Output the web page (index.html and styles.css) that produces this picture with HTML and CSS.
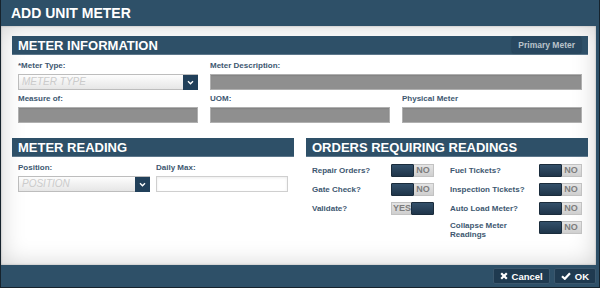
FILE: index.html
```html
<!DOCTYPE html>
<html>
<head>
    <meta charset="UTF-8">
    <title>Add Unit Meter</title>
    <link rel="stylesheet" href="styles.css">
</head>
<body>
    <div class="dialog">
        <div class="dialog-title">ADD UNIT METER</div>

        <div class="dialog-body">
            <div class="section">
                <div class="section-header">
                    <span>METER INFORMATION</span>
                    <button class="header-btn">Primary Meter</button>
                </div>
                <div class="fields three">
                    <div class="field">
                        <label>*Meter Type:</label>
                        <div class="select">
                            <span class="placeholder">METER TYPE</span>
                            <span class="select-btn">
                                <svg width="15" height="15" viewBox="0 0 15 15"><path d="M5 6.2 L7.5 8.7 L10 6.2" fill="none" stroke="#fff" stroke-width="1.4"/></svg>
                            </span>
                        </div>
                    </div>
                    <div class="field span2">
                        <label>Meter Description:</label>
                        <div class="input disabled"></div>
                    </div>
                    <div class="field">
                        <label>Measure of:</label>
                        <div class="input disabled"></div>
                    </div>
                    <div class="field">
                        <label>UOM:</label>
                        <div class="input disabled"></div>
                    </div>
                    <div class="field">
                        <label>Physical Meter</label>
                        <div class="input disabled"></div>
                    </div>
                </div>
            </div>

            <div class="halves">
                <div class="section">
                    <div class="section-header">
                        <span>METER READING</span>
                    </div>
                    <div class="fields two">
                        <div class="field">
                            <label>Position:</label>
                            <div class="select">
                                <span class="placeholder">POSITION</span>
                                <span class="select-btn">
                                    <svg width="15" height="15" viewBox="0 0 15 15"><path d="M5 6.2 L7.5 8.7 L10 6.2" fill="none" stroke="#fff" stroke-width="1.4"/></svg>
                                </span>
                            </div>
                        </div>
                        <div class="field">
                            <label>Daily Max:</label>
                            <div class="input"></div>
                        </div>
                    </div>
                </div>

                <div class="section">
                    <div class="section-header">
                        <span>ORDERS REQUIRING READINGS</span>
                    </div>
                    <div class="toggles">
                        <span class="toggle-label">Repair Orders?</span>
                        <span class="toggle"><span class="knob"></span><span class="state">NO</span></span>
                        <span class="toggle-label">Fuel Tickets?</span>
                        <span class="toggle"><span class="knob"></span><span class="state">NO</span></span>

                        <span class="toggle-label">Gate Check?</span>
                        <span class="toggle"><span class="knob"></span><span class="state">NO</span></span>
                        <span class="toggle-label">Inspection Tickets?</span>
                        <span class="toggle"><span class="knob"></span><span class="state">NO</span></span>

                        <span class="toggle-label">Validate?</span>
                        <span class="toggle"><span class="state">YES</span><span class="knob"></span></span>
                        <span class="toggle-label">Auto Load Meter?</span>
                        <span class="toggle"><span class="knob"></span><span class="state">NO</span></span>

                        <span></span>
                        <span></span>
                        <span class="toggle-label">Collapse Meter Readings</span>
                        <span class="toggle"><span class="knob"></span><span class="state">NO</span></span>
                    </div>
                </div>
            </div>
        </div>

        <div class="dialog-footer">
            <button class="footer-btn">
                <svg width="8" height="8" viewBox="0 0 8 8"><path d="M1.2 1.2 L6.8 6.8 M6.8 1.2 L1.2 6.8" stroke="#fff" stroke-width="2.2"/></svg>
                Cancel
            </button>
            <button class="footer-btn">
                <svg width="10" height="8" viewBox="0 0 10 8"><path d="M1 4.2 L3.8 6.8 L9 1.2" fill="none" stroke="#fff" stroke-width="2.2"/></svg>
                OK
            </button>
        </div>
    </div>
</body>
</html>
```

FILE: styles.css
```css
* {
    margin: 0;
    padding: 0;
    box-sizing: border-box;
}

body {
    font-family: "Liberation Sans", Arial, sans-serif;
    background: #fff;
}

.dialog {
    width: 600px;
    height: 288px;
    display: flex;
    flex-direction: column;
    background: #2e5068;
    border: 1px solid #16232d;
    border-top: none;
}

.dialog-title {
    height: 26px;
    padding-left: 10px;
    color: #fff;
    font-size: 14px;
    font-weight: bold;
    line-height: 27px;
}

.dialog-body {
    height: 239px;
    margin-right: 3px;
    padding: 10px 8px 0 11px;
    background: #fff;
    box-shadow: inset 0 0 24px rgba(0,0,0,0.18), inset 0 0 2px rgba(0,0,0,0.3);
}

.section-header {
    height: 19px;
    display: flex;
    align-items: center;
    justify-content: space-between;
    padding: 0 7px 0 6px;
    background: #2e5068;
    border-bottom: 1px solid #5d778b;
    color: #fff;
    font-size: 13px;
    font-weight: bold;
}

.header-btn {
    height: 16px;
    padding: 0 6px;
    background: #284760;
    color: #b9c2ca;
    border: none;
    border-radius: 2px;
    font-family: inherit;
    font-size: 8.5px;
    font-weight: bold;
    box-shadow: 0 0 2px rgba(0,0,0,0.35);
}

.fields {
    display: grid;
    column-gap: 12px;
    row-gap: 4px;
    padding: 6px 6px 0 6px;
}

.fields.three {
    grid-template-columns: repeat(3, 1fr);
}

.fields.two {
    grid-template-columns: 1fr 1fr;
    column-gap: 6px;
}

.span2 {
    grid-column: span 2;
}

.field label {
    display: block;
    height: 10px;
    margin-bottom: 3px;
    color: #3d5770;
    font-size: 8px;
    font-weight: bold;
    line-height: 10px;
}

.input {
    height: 16px;
    background: #fff;
    border: 1px solid #cfcfcf;
    box-shadow: inset 0 1px 3px rgba(0,0,0,0.08);
}

.input.disabled {
    background: #8f8f8f;
    border-color: #b0b0b0;
    box-shadow: inset 0 1px 1px rgba(0,0,0,0.08);
}

.select {
    height: 16px;
    display: flex;
    align-items: center;
    background: linear-gradient(#fdfdfd, #e6e6e6);
    border: 1px solid #bdbdbd;
}

.placeholder {
    flex: 1;
    padding-left: 3px;
    color: #cbcbcb;
    font-size: 10px;
    font-style: italic;
    line-height: 14px;
}

.select-btn {
    width: 15px;
    height: 15px;
    margin-right: -1px;
    background: #21405a;
    display: flex;
}

.halves {
    display: grid;
    grid-template-columns: 1fr 1fr;
    column-gap: 12px;
    margin-top: 15px;
}

.toggles {
    display: grid;
    grid-template-columns: 79px 59px 89px 43px;
    row-gap: 6px;
    padding: 7px 6px 0 6px;
    align-items: start;
}

.toggle-label {
    min-height: 13px;
    display: flex;
    align-items: center;
    color: #3d5770;
    font-size: 8px;
    font-weight: bold;
    line-height: 9px;
}

.toggle {
    width: 43px;
    height: 13px;
    display: flex;
    background: linear-gradient(#e4e4e4, #cfcfcf);
    border: 1px solid #c2c2c2;
}

.knob {
    width: 23px;
    margin: -1px;
    background: linear-gradient(#33506a, #1f354a);
    border: 1px solid #1a2c3c;
    border-radius: 1px;
}

.state {
    flex: 1;
    text-align: center;
    color: #7d7d7d;
    font-size: 9px;
    font-weight: bold;
    line-height: 11px;
}

.dialog-footer {
    flex: 1;
    display: flex;
    justify-content: flex-end;
    align-items: flex-start;
    gap: 4px;
    padding: 3px 3px 0 0;
}

.footer-btn {
    height: 16px;
    display: inline-flex;
    align-items: center;
    gap: 4px;
    padding: 0 6px;
    background: #1f3a50;
    border: 1px solid #3b576d;
    border-radius: 2px;
    color: #fff;
    font-family: inherit;
    font-size: 9.5px;
    font-weight: bold;
}
```
